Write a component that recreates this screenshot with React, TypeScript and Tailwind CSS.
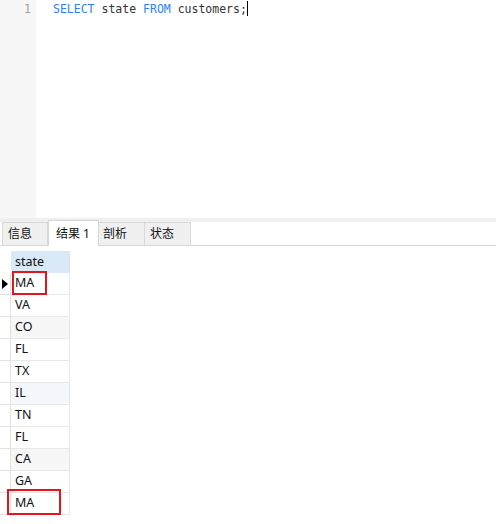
import React from "react";

const rows = ["MA", "VA", "CO", "FL", "TX", "IL", "TN", "FL", "CA", "GA", "MA"];

function rowBg(i: number) {
  if (i === 2 || i === 8) return "bg-[#f7f7f7]";
  if (i === 5) return "bg-[#f4f8fd]";
  return "bg-white";
}

export default function App() {
  return (
    <div className="relative w-[496px] h-[524px] bg-white overflow-hidden font-['Noto_Sans','Noto_Sans_CJK_SC',sans-serif]">
      {/* Editor */}
      <div className="flex h-[218px]">
        <div className="w-[36px] bg-[#f7f7f7] text-right pr-[5px] pt-[1px] font-['DejaVu_Sans_Mono',monospace] text-[11.5px] leading-[16px] text-[#a0a0a0]">
          1
        </div>
        <div className="flex-1 pl-[17px] pt-[1px] font-['DejaVu_Sans_Mono',monospace] text-[11.5px] leading-[16px] text-[#333]">
          <span className="text-[#2f80f7]">SELECT</span> state{" "}
          <span className="text-[#2f80f7]">FROM</span> customers;
          <span className="inline-block w-[1px] h-[15px] bg-black align-[-3px]" />
        </div>
      </div>

      {/* Tabs */}
      <div className="border-t-4 border-[#efefef]">
        <div className="flex items-end h-[24px] pl-[2px] border-b border-[#d6d6d6] text-[12px] text-[#111]">
          <div className="w-[46px] h-[23px] bg-[#f0f0f0] border border-b-0 border-[#d9d9d9] flex items-center pl-[5px]">
            信息
          </div>
          <div className="w-[51px] h-[26px] -mt-[2px] -mb-[1px] bg-white border border-b-0 border-[#d6d6d6] flex items-center pl-[7px]">
            结果 1
          </div>
          <div className="w-[46px] h-[23px] bg-[#f0f0f0] border border-b-0 border-l-0 border-[#d9d9d9] flex items-center pl-[4px]">
            剖析
          </div>
          <div className="w-[46px] h-[23px] bg-[#f0f0f0] border border-b-0 border-l-0 border-[#d9d9d9] flex items-center pl-[5px]">
            状态
          </div>
        </div>
      </div>

      {/* Grid */}
      <div className="mt-[5px] text-[12.5px] text-[#111]">
        <div className="flex h-[22px]">
          <div className="w-[11px]" />
          <div className="w-[59px] bg-[#dae9f7] border-r border-[#e2e2e2] flex items-center pl-[4px]">
            state
          </div>
        </div>
        {rows.map((r, i) => (
          <div key={i} className="flex h-[22px]">
            <div className="w-[11px] border-b border-r border-[#e2e2e2] flex items-center justify-center">
              {i === 0 && (
                <svg width="6" height="10" viewBox="0 0 6 10">
                  <path d="M0 0 L6 5 L0 10 Z" fill="#000" />
                </svg>
              )}
            </div>
            <div className={`w-[59px] border-b border-r border-[#e8e8e8] flex items-center pl-[4px] ${rowBg(i)}`}>
              {r}
            </div>
          </div>
        ))}
      </div>

      {/* Annotation boxes */}
      <div className="absolute left-[12px] top-[271px] w-[35px] h-[24px] border-2 border-[#e8141b]" />
      <div className="absolute left-[7px] top-[489px] w-[54px] h-[26px] border-2 border-[#e8141b]" />
    </div>
  );
}
